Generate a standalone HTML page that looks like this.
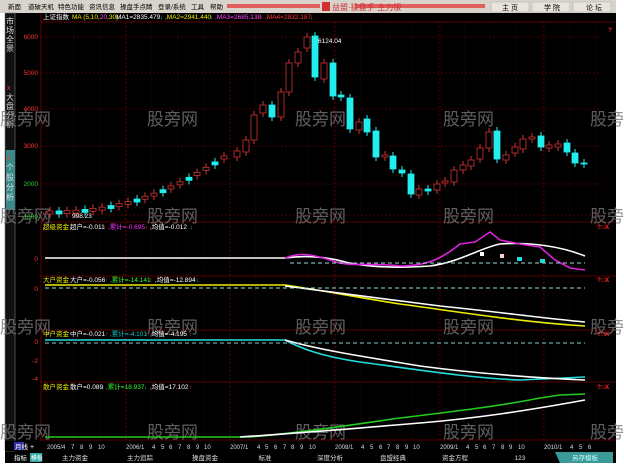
<!DOCTYPE html>
<html><head><meta charset="utf-8"><style>
body{margin:0;width:624px;height:467px;overflow:hidden;background:#fff;font-family:"Liberation Sans","Noto Sans CJK SC",sans-serif}
svg{position:absolute;left:0;top:0}
text{font-family:"Liberation Sans","Noto Sans CJK SC",sans-serif}
</style></head><body>
<svg id="s" width="624" height="467" viewBox="0 0 624 467" xmlns="http://www.w3.org/2000/svg">
<rect x="0" y="0" width="624" height="467" fill="#fff"/>
<rect x="0" y="0" width="616" height="13" fill="#d8d4cc"/>
<g font-size="6.5" fill="#000">
<text x="8" y="9">新面</text><text x="28" y="9">道破天机</text><text x="58" y="9">特色功能</text><text x="89" y="9">资讯信息</text><text x="120" y="9">操盘手点睛</text><text x="158" y="9">登录/系统</text><text x="191" y="9">工具</text><text x="210" y="9">帮助</text>
</g>
<rect x="227" y="4" width="93" height="4" fill="#e06060"/>
<rect x="355" y="4" width="130" height="4" fill="#e06060"/>
<rect x="322" y="2" width="8" height="9" fill="#d03030"/>
<text x="332" y="10" font-size="8" fill="#d03030">益盟·操盘手·主力版</text>
<rect x="491" y="2" width="38" height="10" fill="#e8e4dc" stroke="#aaa" stroke-width=".5"/><text x="502" y="10" font-size="7" fill="#000">主 页</text>
<rect x="532" y="2" width="38" height="10" fill="#e8e4dc" stroke="#aaa" stroke-width=".5"/><text x="544" y="10" font-size="7" fill="#000">学 院</text>
<rect x="573" y="2" width="38" height="10" fill="#e8e4dc" stroke="#aaa" stroke-width=".5"/><text x="586" y="10" font-size="7" fill="#000">论 坛</text>
<rect x="5" y="13" width="611" height="440" fill="#000"/>
<rect x="5" y="451" width="611" height="12" fill="#000"/>
<rect x="5" y="13" width="10" height="438" fill="#111" stroke="#777" stroke-width=".6"/>
<g font-size="8" fill="#ddd">
<text x="6" y="24">市</text><text x="6" y="33">场</text><text x="6" y="42">全</text><text x="6" y="51">景</text>
<text x="7" y="90" fill="#f33" font-size="7">x</text>
<text x="6" y="100">大</text><text x="6" y="109">盘</text><text x="6" y="118">分</text><text x="6" y="127">析</text>
</g>
<rect x="6" y="150" width="9" height="60" fill="#3a8a8a"/>
<g font-size="8" fill="#ddd"><text x="7" y="160" fill="#f33" font-size="7">x</text><text x="6" y="170">个</text><text x="6" y="180">股</text><text x="6" y="190">分</text><text x="6" y="200">析</text></g>
<g id="grid" stroke="#800" stroke-width=".6"></g>
<g id="wm" font-size="17" fill="#777" opacity=".8"></g>
<g id="c"></g>
<g font-size="6.5">
<text x="43" y="19" fill="#fff">上证指数</text>
<text x="72" y="19" fill="#ee0">MA (5,10,<tspan fill="#f4f">20</tspan>,30)</text>
<text x="116" y="19" fill="#fff">MA1=2835.479</text><text x="160" y="19" fill="#0cc">↓</text>
<text x="165" y="19" fill="#ee0">,MA2=2941.440</text><text x="210" y="19" fill="#0cc">↓</text>
<text x="215" y="19" fill="#f4f">,MA3=2685.138</text><text x="260" y="19" fill="#f33">↑</text>
<text x="265" y="19" fill="#f33">,MA4=2832.187</text><text x="310" y="19" fill="#0cc">↓</text>
<text x="318" y="43" fill="#fff">6124.04</text>
<text x="72" y="218" fill="#fff">998.23</text>
<g fill="#f33" text-anchor="end"><text x="38" y="39">6000</text><text x="38" y="75">5000</text><text x="38" y="111">4000</text><text x="38" y="148">3000</text></g>
<g fill="#3c3" text-anchor="end"><text x="38" y="186">2000</text><text x="38" y="219">1000</text></g>
<text x="43" y="229" fill="#ee0">超级资金</text><text x="70" y="229" fill="#fff">超户=-0.011</text><text x="103" y="229" fill="#f33">↑</text><text x="108" y="229" fill="#f3f">,累计=-0.695</text><text x="145" y="229" fill="#f33">↑</text><text x="150" y="229" fill="#fff">,均值=-0.012</text><text x="190" y="229" fill="#0cc">↓</text>
<text x="43" y="282" fill="#ee0">大户资金</text><text x="70" y="282" fill="#fff">大户=-0.056</text><text x="105" y="282" fill="#f33">↑</text><text x="110" y="282" fill="#3f3">,累计=-14.141</text><text x="149" y="282" fill="#f33">↑</text><text x="155" y="282" fill="#fff">,均值=-12.894</text><text x="196" y="282" fill="#0cc">↓</text>
<text x="43" y="336" fill="#ee0">中户资金</text><text x="70" y="336" fill="#fff">中户=-0.021</text><text x="105" y="336" fill="#f33">↑</text><text x="110" y="336" fill="#0cc">,累计=-4.101</text><text x="145" y="336" fill="#f33">↑</text><text x="150" y="336" fill="#fff">,均值=-4.195</text><text x="189" y="336" fill="#f33">↑</text>
<text x="43" y="389" fill="#ee0">散户资金</text><text x="70" y="389" fill="#fff">散户=0.089</text><text x="101" y="389" fill="#0cc">↓</text><text x="106" y="389" fill="#3f3">,累计=18.937</text><text x="144" y="389" fill="#0cc">↓</text><text x="150" y="389" fill="#fff">,均值=17.102</text><text x="189" y="389" fill="#f33">↑</text>
<g fill="#f33" text-anchor="end"><text x="38" y="261">0</text><text x="38" y="291">0</text><text x="38" y="344">0</text><text x="38" y="363">-2</text><text x="38" y="381">-4</text></g>
<g fill="#f22" font-weight="bold"><text x="597" y="229">?□X</text><text x="597" y="282">?□X</text><text x="597" y="336">?□X</text><text x="597" y="389">?□X</text><text x="608" y="32">?</text></g>
</g>
<g fill="none" stroke-width="1.6">
<path d="M45 258 H285 C300 256 320 255 345 262 C370 268 400 268 430 266 C460 262 480 248 500 244 C530 242 560 246 585 256" stroke="#fff"/>
<path d="M285 258 C300 252 310 254 330 260 C350 268 370 262 400 266 C430 266 445 256 460 244 L475 242 L490 232 L500 240 L520 244 L540 247 L555 260 L570 268 L585 270" stroke="#d2d"/>
<path d="M45 285 H285 C320 290 350 296 400 304 C460 312 520 322 585 326" stroke="#ee0"/>
<path d="M285 286 C330 292 380 298 440 306 C500 312 540 318 585 322" stroke="#fff"/>
<path d="M45 340 H285 C300 348 320 356 360 362 C420 370 470 378 520 380 L585 377" stroke="#2dd"/>
<path d="M285 340 C320 350 360 356 420 366 C480 374 540 378 585 380" stroke="#fff"/>
<path d="M45 437 H250 C300 433 350 425 400 418 C450 412 500 406 540 398 L560 395 L585 394" stroke="#2c2"/>
<path d="M240 437 C300 433 360 428 420 423 C480 418 530 410 585 400" stroke="#fff"/>
</g>
<g stroke="#9dd" stroke-dasharray="4 3" stroke-width="1"><path d="M290 263 H585"/><path d="M45 288 H585"/><path d="M45 343 H585" stroke="#8cc"/></g>
<g fill="#fff"><rect x="480" y="252" width="4" height="4"/><rect x="500" y="254" width="4" height="4" fill="#fcc"/></g>
<g fill="#2dd"><rect x="517" y="257" width="5" height="4"/><rect x="540" y="259" width="5" height="4"/></g>
<rect x="5" y="441" width="611" height="10" fill="#000"/>
<rect x="14" y="442" width="10" height="8" fill="#33a"/>
<text x="15" y="449" font-size="6.5" fill="#fff">月线</text><text x="30" y="449" font-size="7" fill="#fff">+</text>
<g font-size="6" fill="#ddd" id="dates"></g>
<rect x="5" y="452" width="611" height="11" fill="#000"/>
<text x="14" y="460" font-size="6.5" fill="#fff">指标</text>
<rect x="30" y="453" width="12" height="9" fill="#3aa"/><text x="31" y="460" font-size="6" fill="#fff">模板</text>
<g font-size="6.5" fill="#ddd" text-anchor="middle">
<text x="75" y="460">主力资金</text><text x="140" y="460">主力追踪</text><text x="205" y="460">操盘资金</text><text x="265" y="460">标准</text><text x="330" y="460">深度分析</text><text x="393" y="460">盘盟经典</text><text x="455" y="460">资金方程</text><text x="520" y="460">123</text>
</g>
<path d="M555 452 H613 V463 H560 Z" fill="#3a9a9a"/><text x="585" y="460" font-size="6.5" fill="#cff" text-anchor="middle">另存模板</text>
</svg>
<script>
var N="http://www.w3.org/2000/svg";
function el(p,t,a,txt){var e=document.createElementNS(N,t);for(var k in a)e.setAttribute(k,a[k]);if(txt)e.textContent=txt;document.getElementById(p).appendChild(e);return e;}
[222,276,330,382,440].forEach(function(y){el('grid','line',{x1:40,x2:616,y1:y,y2:y,stroke:'#a00'});});
el('grid','line',{x1:40,x2:616,y1:22,y2:22,stroke:'#a00'});
el('grid','line',{x1:41,x2:41,y1:13,y2:451,stroke:'#a00'});
[37,73,109,146,184,215].forEach(function(y){el('grid','line',{x1:41,x2:600,y1:y,y2:y,'stroke-dasharray':'2 2'});});
[126,230,335,440,544].forEach(function(x){el('grid','line',{x1:x,x2:x,y1:22,y2:440,'stroke-dasharray':'2 2'});});
for(var x=47;x<600;x+=26.1){el('grid','line',{x1:x,x2:x,y1:22,y2:440,'stroke-dasharray':'1 3',stroke:'#600'});}
[125,222,333,438].forEach(function(y){[0,147,295,443,590].forEach(function(x){el('wm','text',{x:x,y:y},'股旁网');});});
var C=[[237,151,157,1],[246,140,152,1],[254,115,140,1],[263,105,113,1],[272,105,117,0],[281,92,117,1],[289,63,92,1],[298,52,63,1],[307,37,48,1],[315,36,77,0],[324,63,79,1],[333,63,96,0],[341,95,97,0],[350,98,129,0],[359,122,130,1],[367,119,132,0],[376,131,157,0],[385,155,157,1],[393,156,169,0],[402,170,173,0],[411,174,194,0],[419,189,195,1],[428,189,191,0],[437,184,190,1],[445,181,183,1],[454,170,182,1],[463,165,170,1],[471,160,166,1],[480,148,159,1],[489,132,148,1],[497,131,159,0],[506,155,160,1],[515,147,153,1],[523,139,149,1],[532,137,139,1],[541,136,147,0],[549,145,148,1],[558,144,147,1],[567,143,152,0],[575,153,163,0],[584,163,164,0]];
var xs=[50,59,67,76,85,93,102,111,119,128,137,145,154,163,171,180,189,197,206,215,224];
xs.forEach(function(x,i){var t=i/20;var y=214-Math.pow(t,2.2)*55;var up=(i%3)!=1;C.unshift([x,y-3,y,up?1:0]);});
C.forEach(function(c){var x=c[0];el('c','line',{x1:x,x2:x,y1:c[1]-4,y2:c[2]+4,stroke:c[3]?'#c33':'#2ee'});
el('c','rect',{x:x-3,y:c[1],width:6,height:Math.max(1,c[2]-c[1]),fill:c[3]?'#000':'#2ee',stroke:c[3]?'#c33':'#2ee','stroke-width':.8});});
var d=[[47,'2005/4'],[71,'7'],[80,'8'],[89,'9'],[98,'10'],[126,'2006/1'],[152,'4'],[161,'5'],[169,'6'],[178,'7'],[187,'8'],[196,'9'],[204,'10'],[230,'2007/1'],[257,'4'],[265,'5'],[274,'6'],[283,'7'],[291,'8'],[300,'9'],[309,'10'],[335,'2008/1'],[361,'4'],[370,'5'],[379,'6'],[387,'7'],[396,'8'],[405,'9'],[413,'10'],[440,'2009/1'],[466,'4'],[475,'5'],[483,'6'],[492,'7'],[501,'8'],[509,'9'],[518,'10'],[544,'2010/1'],[570,'4'],[579,'5'],[588,'6']];
d.forEach(function(p){el('dates','text',{x:p[0],y:449},p[1]);});
</script>
</body></html>
